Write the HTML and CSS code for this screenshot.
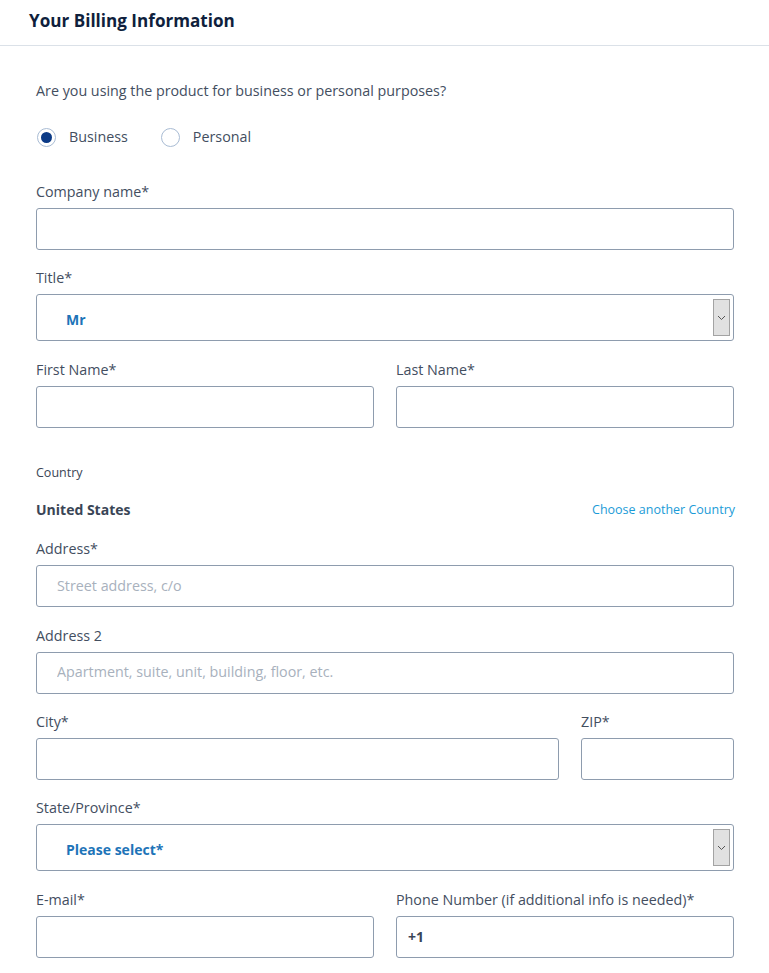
FILE: index.html
```html
<!DOCTYPE html>
<html lang="en">
<head>
<meta charset="utf-8">
<title>Your Billing Information</title>
<link rel="stylesheet" href="styles.css">
</head>
<body>
<header class="page-header">
  <h1 class="page-title">Your Billing Information</h1>
</header>
<main class="form">
  <p class="question">Are you using the product for business or personal purposes?</p>
  <div class="radios">
    <label class="radio"><span class="radio-dot checked"></span><span>Business</span></label>
    <label class="radio"><span class="radio-dot"></span><span>Personal</span></label>
  </div>

  <div class="field">
    <div class="label">Company name*</div>
    <input class="input" type="text">
  </div>

  <div class="field">
    <div class="label">Title*</div>
    <div class="select"><span class="select-value">Mr</span><span class="select-btn"><svg width="9" height="6" viewBox="0 0 9 6"><path d="M1 1 L4.5 4.5 L8 1" fill="none" stroke="#555" stroke-width="1"/></svg></span></div>
  </div>

  <div class="row">
    <div class="field">
      <div class="label">First Name*</div>
      <input class="input" type="text">
    </div>
    <div class="field">
      <div class="label">Last Name*</div>
      <input class="input" type="text">
    </div>
  </div>

  <div class="country">
    <div class="country-label">Country</div>
    <div class="country-row">
      <span class="country-name">United States</span>
      <a class="country-link" href="#">Choose another Country</a>
    </div>
  </div>

  <div class="field">
    <div class="label">Address*</div>
    <input class="input" type="text" placeholder="Street address, c/o">
  </div>

  <div class="field">
    <div class="label">Address 2</div>
    <input class="input" type="text" placeholder="Apartment, suite, unit, building, floor, etc.">
  </div>

  <div class="row row-city">
    <div class="field">
      <div class="label">City*</div>
      <input class="input" type="text">
    </div>
    <div class="field">
      <div class="label">ZIP*</div>
      <input class="input" type="text">
    </div>
  </div>

  <div class="field">
    <div class="label">State/Province*</div>
    <div class="select"><span class="select-value">Please select*</span><span class="select-btn"><svg width="9" height="6" viewBox="0 0 9 6"><path d="M1 1 L4.5 4.5 L8 1" fill="none" stroke="#555" stroke-width="1"/></svg></span></div>
  </div>

  <div class="row">
    <div class="field">
      <div class="label">E-mail*</div>
      <input class="input" type="text">
    </div>
    <div class="field">
      <div class="label">Phone Number (if additional info is needed)*</div>
      <input class="input input-phone" type="text" value="+1">
    </div>
  </div>
</main>
</body>
</html>
```

FILE: styles.css
```css
* { box-sizing: border-box; }
html, body { margin: 0; padding: 0; background: #fff; }
body {
  font-family: "Open Sans", "Noto Sans", "DejaVu Sans", sans-serif;
  color: #3f4b5d;
  font-size: 14.3px;
}
.page-header {
  height: 46px;
  border-bottom: 1px solid #dbe1e8;
  padding: 0 29px;
  display: flex;
  align-items: center;
}
.page-title {
  margin: 0;
  margin-top: -5px;
  font-size: 17.1px;
  font-weight: 700;
  color: #0f1f3d;
}
.form {
  padding: 35px 35px 0 36px;
}
.question {
  margin: 0;
  line-height: 20px;
  color: #434e5f;
}
.radios {
  display: flex;
  gap: 32px;
  margin-top: 26px;
  margin-bottom: 35px;
  height: 20px;
  align-items: center;
}
.radio {
  display: flex;
  align-items: center;
  gap: 13px;
  line-height: 20px;
  color: #434e5f;
}
.radio-dot {
  width: 19px;
  height: 19px;
  border-radius: 50%;
  border: 1px solid #a9bcd4;
  display: flex;
  align-items: center;
  justify-content: center;
  margin-left: 1px;
}
.radio-dot.checked::after {
  content: "";
  width: 11px;
  height: 11px;
  border-radius: 50%;
  background: #0b3a86;
}
.field {
  margin-bottom: 18.3px;
  min-width: 0;
}
.label {
  line-height: 20px;
  margin-bottom: 6px;
  color: #434e5f;
}
.input {
  display: block;
  width: 100%;
  height: 42px;
  border: 1px solid #8e9cae;
  border-radius: 3px;
  background: #fff;
  padding: 0 20px 2px;
  font-family: inherit;
  font-size: 14.3px;
  color: #2f3a4a;
  outline: none;
}
.input::placeholder { color: #a8b1bd; }
.input-phone {
  padding: 0 11px;
  font-size: 14px;
  font-weight: 700;
  color: #3a4556;
}
.select {
  height: 47px;
  border: 1px solid #8e9cae;
  border-radius: 3px;
  display: flex;
  align-items: center;
  justify-content: space-between;
  padding: 0 3px 0 29px;
}
.select-value {
  font-size: 14px;
  font-weight: 700;
  color: #1d74b8;
  padding-top: 3px;
}
.select-btn {
  width: 17px;
  height: 37px;
  background: #e1e1e1;
  border: 1px solid #a3a3a3;
  display: flex;
  align-items: center;
  justify-content: center;
}
.row {
  display: grid;
  grid-template-columns: 1fr 1fr;
  column-gap: 22px;
}
.row-city {
  grid-template-columns: 1fr 153px;
}
.country {
  padding-top: 18px;
  margin-bottom: 19.5px;
}
.country-label {
  font-size: 12.5px;
  line-height: 18px;
  color: #3a4556;
}
.country-row {
  margin-top: 18px;
  display: flex;
  justify-content: space-between;
  align-items: center;
  line-height: 20px;
}
.country-name {
  font-size: 14px;
  font-weight: 700;
  color: #3a4556;
}
.country-link {
  font-size: 12.5px;
  color: #1b9bd7;
  text-decoration: none;
  margin-right: -1px;
}
```
